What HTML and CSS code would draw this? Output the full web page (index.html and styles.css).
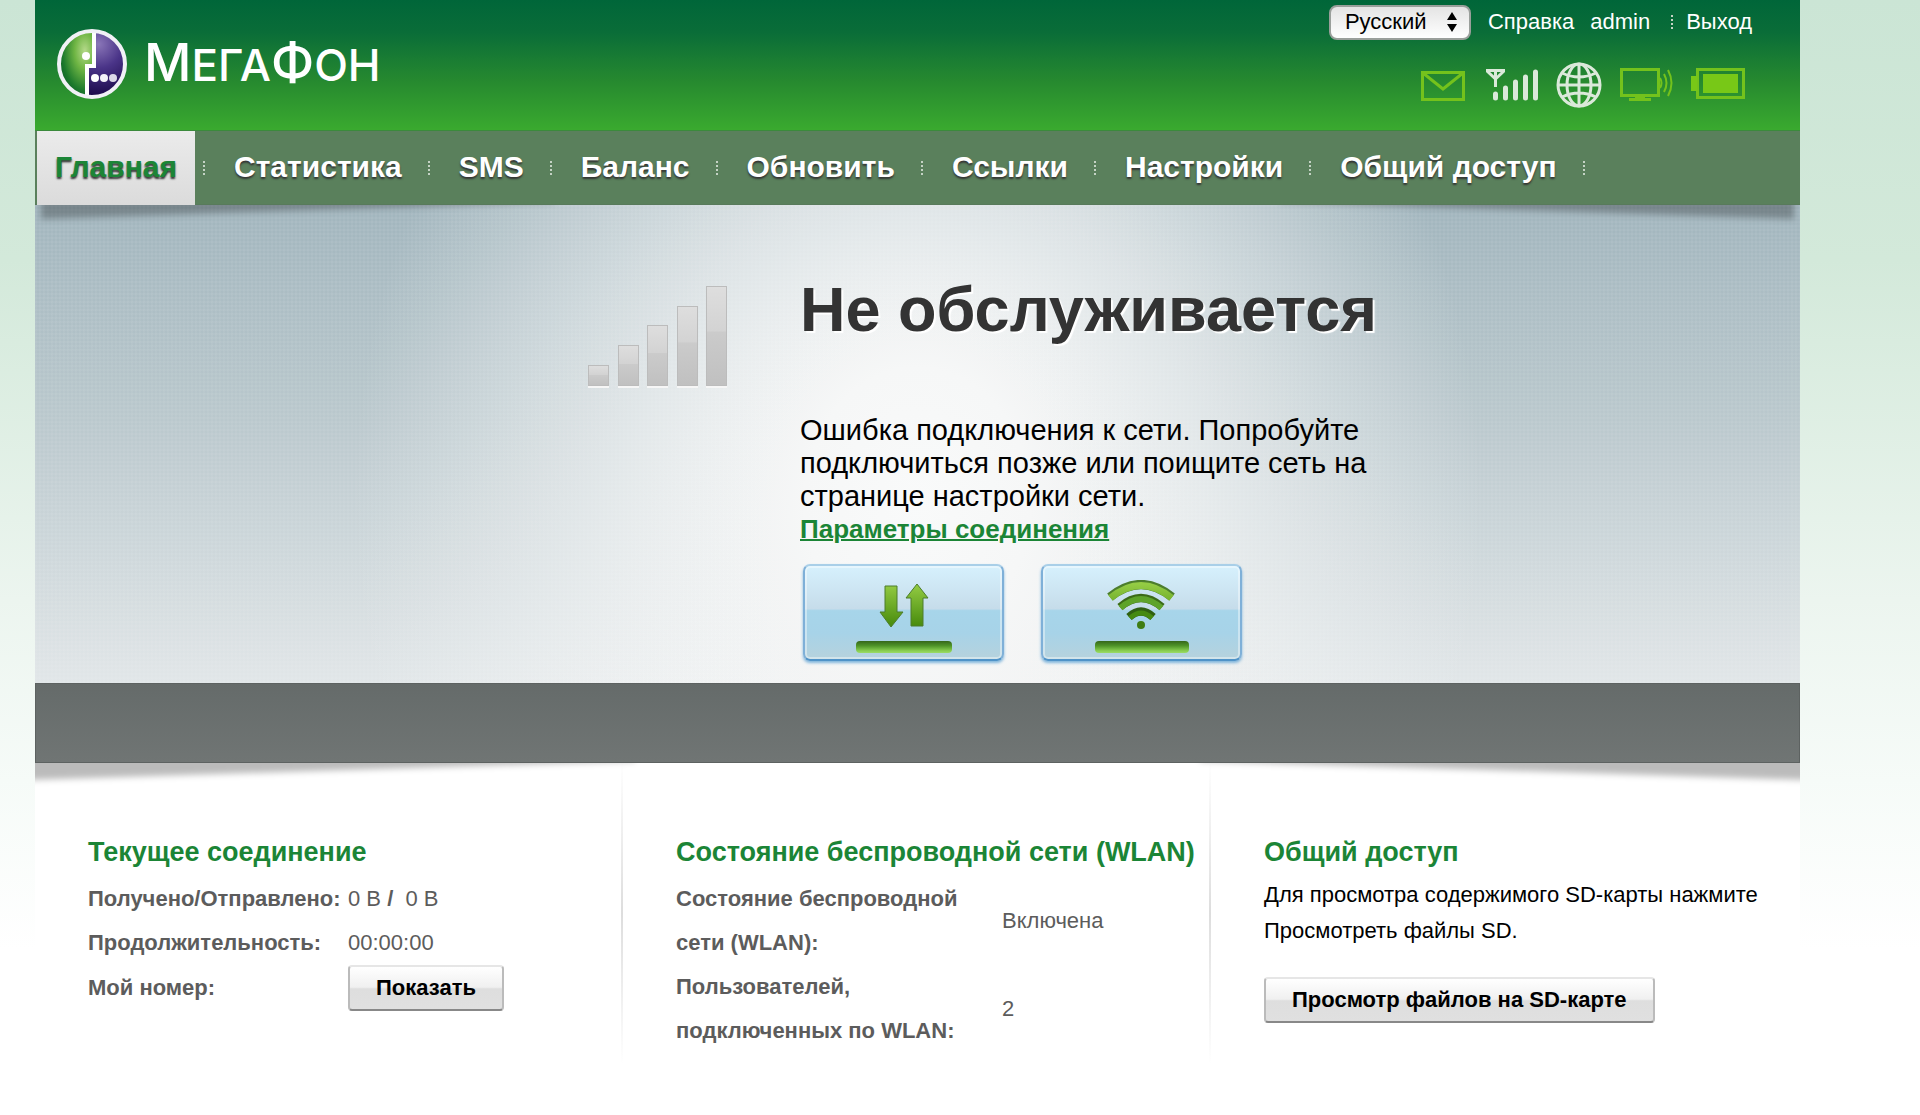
FILE: index.html
```html
<!DOCTYPE html>
<html lang="ru">
<head>
<meta charset="utf-8">
<title>МегаФон</title>
<link rel="stylesheet" href="styles.css">
</head>
<body>
<div class="page">
  <header class="header">
    <div class="logo">
      <svg class="logo-mark" viewBox="0 0 70 70" aria-hidden="true">
        <defs>
          <radialGradient id="lg" cx=".75" cy=".3" r=".8"><stop offset="0" stop-color="#b5d98a"/><stop offset=".35" stop-color="#6fb544"/><stop offset=".75" stop-color="#1d7a2c"/><stop offset="1" stop-color="#0a5a28"/></radialGradient>
          <radialGradient id="lp" cx=".6" cy=".2" r=".8"><stop offset="0" stop-color="#8a76b8"/><stop offset=".45" stop-color="#4a3488"/><stop offset="1" stop-color="#1a0848"/></radialGradient>
        </defs>
        <circle cx="35" cy="35" r="33" fill="url(#lp)"/>
        <path d="M37 2A33 33 0 1 0 30 68V37H37Z" fill="url(#lg)"/>
        <path d="M37 2V37H30V68" fill="none" stroke="#fff" stroke-width="4"/>
        <circle cx="35" cy="35" r="33" fill="none" stroke="#f1f1f6" stroke-width="4"/>
        <circle cx="29" cy="27" r="4" fill="#fff"/>
        <circle cx="38" cy="49" r="4" fill="#fff"/><circle cx="47" cy="49" r="4" fill="#f4f2f8"/><circle cx="56" cy="49" r="4" fill="#dcd8e8"/>
      </svg>
      <span class="logo-text"><b>М</b>ЕГА<b>Ф</b>ОН</span>
    </div>
    <div class="tools">
      <div class="links">
        <select class="lang" aria-label="Язык"><option>Русский</option></select>
        <a href="#">Справка</a>
        <a href="#">admin</a>
        <i class="sep"></i>
        <a href="#">Выход</a>
      </div>
      <div class="status">
        <svg width="46" height="46" viewBox="0 0 46 46" fill="none" stroke="#74c21c" stroke-width="3"><path d="M1.500 10.500H42.500V37.500H1.500ZM2 11 22 27 42 11"/></svg>
        <svg width="53" height="46" viewBox="0 0 53 46" fill="none" stroke="#dbe9da"><path d="M1 8.500H20M2 9 10.500 17 19 9M10.500 8V25" stroke-width="3"/><path d="M10.500 32V36M20.500 26V36M30.500 20V36M40.500 15V36M50.500 10V36" stroke-width="5" stroke-linecap="round"/></svg>
        <svg width="46" height="46" viewBox="0 0 46 46" fill="none" stroke="#dbe9da" stroke-width="3"><circle cx="23" cy="23" r="21"/><ellipse cx="23" cy="23" rx="12" ry="21"/><path d="M23 2V44M2 23H44M6 11Q23 19 40 11M6 35Q23 27 40 35"/></svg>
        <svg width="53" height="46" viewBox="0 0 53 46" fill="none" stroke="#74c21c" stroke-width="3"><path d="M1.500 7.500H38.500V33.500H1.500Z"/><path d="M15 34H25V36H31V39H9V36H15Z" fill="#74c21c" stroke="none"/><path d="M40 16Q43 21 40 26M44 12Q49 21 44 30M48 8Q55 21 48 34" stroke-width="2"/></svg>
        <svg width="54" height="46" viewBox="0 0 54 46" fill="none" stroke="#74c21c" stroke-width="3"><path d="M6.500 7.500H52.500V35.500H6.500Z"/><path d="M0 14H6V29H0ZM12 12H47V31H12Z" fill="#78c817" stroke="none"/></svg>
      </div>
    </div>
  </header>

  <nav class="nav">
    <a class="active" href="#">Главная</a><i class="sep"></i>
    <a href="#">Статистика</a><i class="sep"></i>
    <a href="#">SMS</a><i class="sep"></i>
    <a href="#">Баланс</a><i class="sep"></i>
    <a href="#">Обновить</a><i class="sep"></i>
    <a href="#">Ссылки</a><i class="sep"></i>
    <a href="#">Настройки</a><i class="sep"></i>
    <a href="#">Общий доступ</a><i class="sep"></i>
  </nav>

  <section class="hero">
    <svg class="shade" viewBox="0 0 1765 24" preserveAspectRatio="none" aria-hidden="true"><path d="M6 -10V14L520 -3V-10ZM1759 -10V14L1245 -3V-10Z"/></svg>
    <svg class="signal" width="144" height="104" viewBox="0 0 144 104" aria-hidden="true">
      <defs><linearGradient id="bar" x1="0" y1="0" x2="0" y2="1"><stop offset="0" stop-color="#dedede"/><stop offset=".45" stop-color="#d3d3d3"/><stop offset=".46" stop-color="#cbcbcb"/><stop offset="1" stop-color="#c0c0c0"/></linearGradient></defs>
      <path d="M1 100H22V103H1ZM31 100H52V103H31ZM60 100H81V103H60ZM90 100H111V103H90ZM119 100H140V103H119Z" fill="#f6f6f6"/>
      <g fill="url(#bar)" stroke="#bcbcbc"><rect x="1.500" y="80.500" width="20" height="20"/><rect x="31.500" y="60.500" width="20" height="40"/><rect x="60.500" y="40.500" width="20" height="60"/><rect x="90.500" y="21.500" width="20" height="79"/><rect x="119.500" y="1.500" width="20" height="99"/></g>
    </svg>
    <div class="message">
      <h1>Не обслуживается</h1>
      <p>Ошибка подключения к сети. Попробуйте подключиться позже или поищите сеть на странице настройки сети.</p>
      <a href="#">Параметры соединения</a>
      <div class="switches">
        <button class="switch" aria-label="Мобильные данные">
          <svg width="98" height="76" viewBox="0 0 98 76">
            <defs>
              <linearGradient id="gr" gradientUnits="userSpaceOnUse" x1="0" y1="4" x2="0" y2="52"><stop offset="0" stop-color="#94cc44"/><stop offset="1" stop-color="#3d8205"/></linearGradient>
              <linearGradient id="led" x1="0" y1="0" x2="0" y2="1"><stop offset="0" stop-color="#35661a"/><stop offset=".4" stop-color="#4f9428"/><stop offset=".8" stop-color="#86cc4e"/><stop offset="1" stop-color="#9bdc66"/></linearGradient>
            </defs>
            <path d="M30 6H42V32H48L36 47 25 32H30ZM62 4 73 18H68V46H56V18H51Z" fill="url(#gr)" stroke="#4c7d2c" stroke-linejoin="round"/>
            <rect x="1" y="61" width="96" height="12" rx="4" fill="url(#led)"/>
          </svg>
        </button>
        <button class="switch" aria-label="Wi-Fi">
          <svg width="98" height="76" viewBox="0 0 98 76">
            <g fill="none" stroke="url(#gr)"><path d="M17 17Q48 -8 79 17" stroke="#4c7d2c" stroke-width="9"/><path d="M17.500 18Q48 -7 78.500 18" stroke-width="7"/><path d="M27 27Q48 9 69 27" stroke="#3c6a18" stroke-width="8"/><path d="M27.500 28Q48 10 68.500 28" stroke="#5ea32a" stroke-width="6"/><path d="M36 37Q48 26 60 37" stroke="#2f5f12" stroke-width="8"/><path d="M37 38Q48 28 59 38" stroke="#458a10" stroke-width="5"/></g>
            <circle cx="48" cy="45" r="4" fill="#3f7d14"/>
            <rect x="2" y="61" width="94" height="12" rx="4" fill="url(#led)"/>
          </svg>
        </button>
      </div>
    </div>
  </section>
  <div class="band"></div>

  <main class="columns">
    <svg class="shade light" viewBox="0 0 1765 24" preserveAspectRatio="none" aria-hidden="true"><path d="M-9 -10V17L600 -2V-10ZM1774 -10V17L1165 -2V-10Z"/></svg>
    <section>
      <h2>Текущее соединение</h2>
      <table class="info">
        <tr><th>Получено/Отправлено:</th><td>0 B <b>/</b>&nbsp; 0 B</td></tr>
        <tr><th>Продолжительность:</th><td>00:00:00</td></tr>
        <tr><th>Мой номер:</th><td><button class="btn">Показать</button></td></tr>
      </table>
    </section>
    <section>
      <h2>Состояние беспроводной сети (WLAN)</h2>
      <table class="info wlan">
        <tr><th>Состояние беспроводной сети (WLAN):</th><td>Включена</td></tr>
        <tr><th>Пользователей, подключенных по WLAN:</th><td>2</td></tr>
      </table>
    </section>
    <section>
      <h2>Общий доступ</h2>
      <p>Для просмотра содержимого SD-карты нажмите Просмотреть файлы SD.</p>
      <button class="btn">Просмотр файлов на SD-карте</button>
    </section>
  </main>
</div>
</body>
</html>
```

FILE: styles.css
```css
* { box-sizing: border-box; }

body {
  margin: 0;
  background: #fff linear-gradient(#cbe5d5 0, #d3e9da 260px, #ecf5ef 600px, #f6fbf8 780px, #fff 950px) no-repeat;
  font-family: "Liberation Sans", Arial, sans-serif;
  font-size: 22px;
  color: #111;
}

.page {
  margin: 0 120px 0 35px;
  min-height: 100vh;
  background: #fff;
}

.header {
  display: flex;
  justify-content: space-between;
  height: 131px;
  padding: 0 48px 0 22px;
  background: linear-gradient(#006639, #0a6d38 25%, #26892f 62%, #3aaa2f);
  border-bottom: 1px solid #3b8a3c;
}

.logo {
  display: flex;
  align-items: center;
  gap: 17px;
  height: 127px;
}
.logo-mark { width: 70px; height: 70px; }
.logo-text {
  font: 500 44px/48px Inter, sans-serif;
  color: #fff;
}
.logo-text b { font-size: 52px; font-weight: 500; }

.tools { display: flex; flex-direction: column; align-items: flex-end; }
.links {
  display: flex;
  align-items: center;
  height: 44px;
  color: #fff;
}
.links a { color: #fff; text-decoration: none; }
.links a + a { margin-left: 16px; }
.links .sep { margin: 0 13px 0 21px; }

.lang {
  appearance: none;
  width: 142px;
  height: 35px;
  margin-right: 17px;
  padding: 0 14px;
  border: 2px solid #9a9f9b;
  border-radius: 8px;
  background:
    url("data:image/svg+xml,%3Csvg xmlns='http://www.w3.org/2000/svg' width='10' height='20'%3E%3Cpath d='M0 8 5 0 10 8ZM0 12 5 20 10 12Z'/%3E%3C/svg%3E") no-repeat right 12px center,
    linear-gradient(#e4e4e4, #fff);
  font: 22px/24px "Liberation Sans", Arial, sans-serif;
  color: #000;
}

.status {
  display: flex;
  align-items: center;
  gap: 18px;
  margin: 18px 7px 0 0;
}

.sep {
  flex: none;
  width: 2px;
  height: 14px;
  background: repeating-linear-gradient(#c5d3c5 0 2px, #0000 2px 4px);
}

.nav {
  display: flex;
  align-items: center;
  height: 74px;
  padding-left: 2px;
  background: #5a805c;
  border-bottom: 1px solid #587a5b;
}
.nav a {
  height: 74px;
  padding: 0 18px;
  font-weight: bold;
  font-size: 30px;
  line-height: 72px;
  color: #fff;
  text-decoration: none;
  text-shadow: 0 2px 2px #333;
}
.nav .active {
  background: linear-gradient(#ebebeb, #dbdbdb);
  color: #1b8536;
}
.nav .sep { margin: 0 11px 0 8px; }

.hero {
  position: relative;
  display: flex;
  gap: 70px;
  height: 478px;
  padding: 78px 0 0 552px;
  background:
    repeating-linear-gradient(90deg, #ffffff0c 0 2px, #0000 2px 4px),
    repeating-linear-gradient(#ffffff0c 0 2px, #0000 2px 4px),
    radial-gradient(ellipse 32% 140% at 50% 62%, #f9fafa 0, #f6f7f7 20%, #f6f7f7aa 50%, #f6f7f700 100%),
    linear-gradient(#a1b5bd, #bac8cd 45%, #e1e6e8);
}
.shade {
  position: absolute;
  top: 0;
  left: 0;
  width: 100%;
  height: 24px;
  overflow: hidden;
  fill: #0004;
}
.shade path { filter: blur(3px); }
.light { fill: #0004; }
.signal { flex: none; margin-top: 2px; }

.message { width: 600px; margin-left: -1px; }
.message h1 {
  margin: 0;
  font-size: 63px;
  line-height: 52px;
  color: #333;
  text-shadow: 2px 2px 1px #fff;
}
.message p {
  margin: 79px 0 0;
  font-size: 29px;
  line-height: 33px;
  color: #000;
}
.message a {
  font-size: 26px;
  line-height: 32px;
  font-weight: bold;
  color: #1b8536;
  text-decoration-thickness: 2px;
}

.switches { display: flex; gap: 37px; margin: 19px 0 0 3px; }
.switch {
  width: 201px;
  height: 97px;
  padding: 11px 0 0;
  border: 2px solid #7fb5dc;
  border-color: #a9cfe8 #7fb0d8 #4f93c8;
  border-radius: 7px;
  background: linear-gradient(#d6f1fd, #c6dcea 46%, #a7d5ea 48%, #a7d3e8 72%, #b6d2dd);
  box-shadow: inset 0 0 0 2px #ffffff66, 0 2px 3px #7fb5dc;
}
.switch svg { display: block; margin: 0 auto; }

.band {
  height: 80px;
  background: linear-gradient(#656b6a, #707574);
  border: 1px solid #5d6261;
}

.columns {
  position: relative;
  display: grid;
  grid-template-columns: 586px 588px 1fr;
}
.columns section {
  min-height: 300px;
  padding: 72px 0 0 53px;
}
.columns section + section {
  border-left: 2px solid;
  border-image: linear-gradient(#fff, #ddd 50%, #fff) 1;
}
.columns h2 {
  margin: 0 0 8px;
  font-size: 27px;
  line-height: 34px;
  color: #1b8536;
  white-space: nowrap;
}
.columns p {
  margin: 0 0 28px;
  padding-right: 30px;
  line-height: 36px;
  color: #000;
}

.info { border-collapse: collapse; line-height: 44px; color: #5c5c5c; }
.info th { width: 260px; padding: 0; text-align: left; }
.info td { padding: 0; }
.wlan th { width: 326px; padding-right: 30px; }

.btn {
  display: block;
  height: 46px;
  padding: 0 26px;
  border: 2px solid #ddd;
  border-color: #e6e6e6 #bbb #888;
  border-radius: 4px;
  background: linear-gradient(#fff, #f0f0f0 48%, #dedede 52%, #e0e0e0);
  font: bold 22px/40px "Liberation Sans", Arial, sans-serif;
  color: #000;
}
```
